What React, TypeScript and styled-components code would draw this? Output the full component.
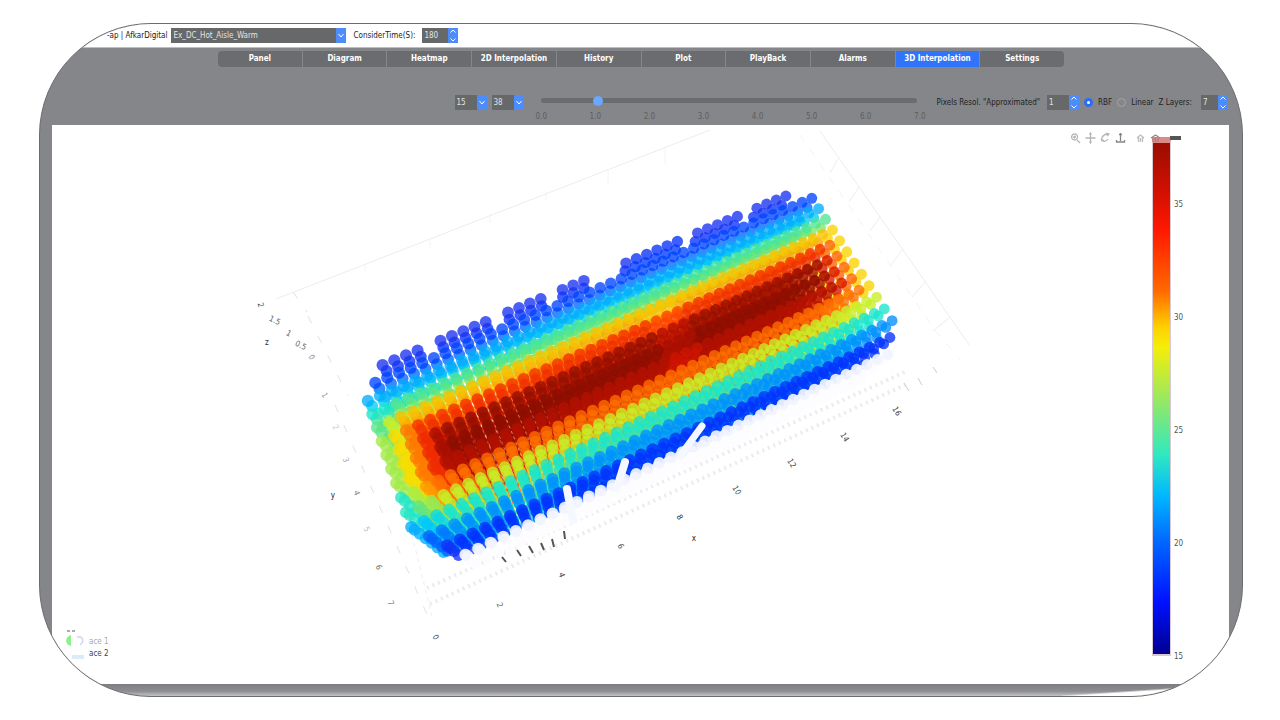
import React from "react";
import styled, { createGlobalStyle } from "styled-components";

const GlobalStyle = createGlobalStyle`
  * { box-sizing: border-box; }
  body {
    margin: 0;
    background: #fff;
    font-family: "DejaVu Sans Condensed", "DejaVu Sans", sans-serif;
    font-size: 8px;
    line-height: 12px;
    color: #222;
  }
  button, input, select { font: inherit; margin: 0; }
`;

const Page = styled.main`
  min-height: 100vh;
  padding: 23px 37px 23px 39px;
  display: flex;
`;

const Frame = styled.div`
  flex: 1;
  min-width: 0;
  display: flex;
  flex-direction: column;
  overflow: hidden;
  border: 1px solid #6c6c6e;
  border-radius: 112px;
  background: #85868a;
`;

const TopBar = styled.header`
  display: flex;
  align-items: center;
  gap: 7px;
  height: 24px;
  padding-left: 67px;
  background: #fff;
  border-bottom: 1px solid #bdbdc0;
`;

const Brand = styled.span`
  margin-right: -3px;
  white-space: nowrap;
`;

const FieldLabel = styled.label<{ $gap?: number }>`
  margin-right: ${(p) => p.$gap ?? 0}px;
  white-space: nowrap;
`;

const Field = styled.span<{ $width: number }>`
  position: relative;
  display: flex;
  flex: none;
  width: ${(p) => p.$width}px;
  height: 15px;
  background: #66686a;
`;

const fieldText = `
  width: 100%;
  height: 100%;
  padding: 0 12px 0 2px;
  border: 0;
  background: transparent;
  color: #e4e4e4;
  appearance: none;
`;

const Select = styled.select`${fieldText}`;

const NumberInput = styled.input`
  ${fieldText}
  -moz-appearance: textfield;
  &::-webkit-inner-spin-button { display: none; }
`;

const Arrow = styled.svg`
  position: absolute;
  top: 0;
  right: 0;
  width: 10px;
  height: 15px;
  background: #4d8dfb;
  border-radius: 1px;
  pointer-events: none;
`;

const Tabs = styled.nav`
  display: flex;
  width: 846px;
  max-width: 100%;
  margin: 3px auto 0;
  border-radius: 4px;
  overflow: hidden;
  background: #6b6c6f;
`;

const Tab = styled.button<{ $active?: boolean }>`
  flex: 1 1 0;
  height: 16px;
  padding: 0;
  border: 0;
  border-right: 1px solid #85868a;
  background: ${(p) => (p.$active ? "#2f74fa" : "transparent")};
  color: #fff;
  font-weight: 700;
  white-space: nowrap;
  &:last-child { border-right: 0; }
`;

const Controls = styled.section`
  display: flex;
  justify-content: flex-end;
  align-items: flex-start;
  height: 58px;
  padding: 28px 14px 0 0;
`;

const ControlGroup = styled.div`
  display: flex;
  align-items: center;
  gap: 5px;
  height: 15px;
`;

const SliderBox = styled.div`
  flex: 0 1 390px;
  margin: 3px 11px 0 12px;
`;

const Slider = styled.input`
  display: block;
  width: calc(100% - 14px);
  height: 5px;
  margin-left: 5px;
  border-radius: 3px;
  background: #6b6c6f;
  appearance: none;
  &::-webkit-slider-thumb {
    appearance: none;
    width: 10px;
    height: 10px;
    border-radius: 50%;
    background: #6ba6ff;
  }
`;

const SliderScale = styled.div`
  display: flex;
  justify-content: space-between;
  margin-top: 8px;
  color: #5c5e61;
`;

const Radio = styled.input`
  width: 9px;
  height: 9px;
  border-radius: 50%;
  border: 1px solid #a3a4a7;
  background: #85868a;
  appearance: none;
  &:checked {
    border: 3px solid #2a6df0;
    background: #fff;
  }
`;

const Plot = styled.section`
  position: relative;
  flex: 1;
  display: flex;
  min-height: 0;
  margin: 0 13px 0 12px;
  background: #fff;
`;

const Chart = styled.svg`
  flex: 1;
  min-width: 0;
  height: 100%;
  font-size: 8px;
`;

const ColorBar = styled.div`
  display: flex;
  gap: 3px;
  width: 77px;
  padding: 12px 0 28px;
`;

const ColorRamp = styled.div`
  width: 19px;
  border: 1px solid #d9c9d2;
  border-top: 6px solid #dc8a86;
  border-bottom-width: 2px;
  background: linear-gradient(
    #9a0d00, #d51000 10%, #ff1800 17%, #ff6a00 29%, #ffd000 36%, #f4ee08 40%,
    #9ae860 50%, #30e8c0 61%, #00b8ff 69%, #0068ff 78%, #0010ff 90%, #000090
  );
`;

const ColorTicks = styled.ol`
  display: flex;
  flex-direction: column;
  justify-content: space-between;
  margin: 0 0 -7px;
  padding: 62px 0 0;
  list-style: none;
  color: #555;
`;

const ModeBar = styled.div`
  position: absolute;
  top: 7px;
  right: 48px;
  display: flex;
  gap: 4px;
`;

const ModeButton = styled.button<{ $spaced?: boolean }>`
  width: 11px;
  height: 12px;
  padding: 0;
  margin-left: ${(p) => (p.$spaced ? 5 : 0)}px;
  border: 0;
  background: none;
  svg { display: block; width: 11px; height: 12px; }
`;

const Legend = styled.div`
  position: absolute;
  left: 12px;
  bottom: 24px;
  display: flex;
  gap: 4px;
`;

const LegendNames = styled.div`
  display: flex;
  flex-direction: column;
  justify-content: flex-end;
  color: #444;
  span:first-child { color: #aaa; }
`;

const Footer = styled.footer`
  height: 12px;
  background: linear-gradient(to bottom right, transparent 46%, #fff 54%) right / 180px 100% no-repeat,
    linear-gradient(#7d7e82, #8d8e92 60%, #c4c4c6);
`;

type Pt = { x: number; y: number };

const COLS = 42;
const ROWS = 14;
/* Depth of each layer, as a share of the way to the vanishing point. */
const LAYER_DEPTHS = [0, 0.02, 0.05, 0.085, 0.12, 0.155, 0.19, 0.225];
const TL: Pt = { x: 359, y: 375 };
const TR: Pt = { x: 805, y: 188 };
const BR: Pt = { x: 908, y: 345 };
const BL: Pt = { x: 427, y: 573 };
const DEPTH: Pt = { x: 580, y: 660 };

/* Perspective mapping of the unit square onto the top layer. */
const sx = TL.x - TR.x + BR.x - BL.x;
const sy = TL.y - TR.y + BR.y - BL.y;
const dx1 = TR.x - BR.x, dx2 = BL.x - BR.x;
const dy1 = TR.y - BR.y, dy2 = BL.y - BR.y;
const det = dx1 * dy2 - dx2 * dy1;
const pg = (sx * dy2 - dx2 * sy) / det;
const ph = (dx1 * sy - sx * dy1) / det;

function project(col: number, row: number, depth = 0): Pt {
  const u = col / COLS, v = row / ROWS;
  const w = pg * u + ph * v + 1;
  const x = ((TR.x - TL.x + pg * TR.x) * u + (BL.x - TL.x + ph * BL.x) * v + TL.x) / w;
  const y = ((TR.y - TL.y + pg * TR.y) * u + (BL.y - TL.y + ph * BL.y) * v + TL.y) / w;
  return { x: x + (DEPTH.x - x) * depth, y: y + (DEPTH.y - y) * depth };
}

const STOPS: [number, number[]][] = [
  [0, [35, 50, 238]], [0.12, [0, 50, 255]], [0.28, [0, 145, 255]], [0.36, [0, 200, 250]],
  [0.44, [25, 230, 205]], [0.52, [100, 228, 125]], [0.6, [200, 238, 40]], [0.66, [250, 220, 0]],
  [0.75, [255, 135, 0]], [0.85, [255, 60, 0]], [0.92, [215, 20, 0]], [1, [140, 14, 0]],
];

function heat(t: number): string {
  if (t < 0) t = 0;
  for (let i = 1; i < STOPS.length; i++) {
    const [b, cb] = STOPS[i];
    if (t <= b) {
      const [a, ca] = STOPS[i - 1];
      const f = (t - a) / (b - a);
      return `rgb(${ca.map((c, k) => Math.round(c + (cb[k] - c) * f)).join(",")})`;
    }
  }
  return "rgb(140,14,0)";
}

const PROFILE = [0.03, 0.15, 0.32, 0.5, 0.69, 0.87, 0.99, 1, 0.96, 0.78, 0.6, 0.44, 0.28, 0.11, 0.1];
const LOW_CAP = [0.57, 0.66, 0.77, 0.88, 0.97];
const HIGH_CAP = [0.67, 0.8, 0.92, 0.98];
const RACKS = [[376, 422], [433, 488], [500, 542], [553, 594], [625, 684], [694, 742], [751, 790]];

function temperature(col: number, row: number, layer: number): number {
  /* Upper rows of a deeper layer warm up towards the middle of the aisle. */
  const at = Math.min(ROWS, row + LAYER_DEPTHS[layer] * (20 - row) * Math.max(0, 1 - row / 9));
  const lo = Math.floor(at), hi = Math.min(ROWS, lo + 1);
  let t = PROFILE[lo] + (PROFILE[hi] - PROFILE[lo]) * (at - lo);
  if (row === 0 && col > 24 && col < 31) t += 0.06;
  if (at > 4 && at < 9 && Math.abs(col - 25) < 2) t -= 0.03;
  if (col < 5) t = Math.min(t, LOW_CAP[col]);
  if (COLS - col < 4) t = Math.min(t, HIGH_CAP[COLS - col]);
  if (col < 3 && row > 8) t -= 0.12 - col * 0.04;
  if (col < 2 && row > 2 && row < 5) t -= 0.06;
  return t;
}

function isPresent(col: number, row: number, layer: number): boolean {
  const p = project(col, row);
  if (row === 0) return layer < 2 && RACKS.some(([a, b]) => p.x >= a && p.x <= b);
  if (row === 1 && col === 0) return false;
  if (row === 11) return col > 2 || layer < 7;
  if (row === 12) return col > 0 && layer < 5;
  if (row === 13) return col > 1 && col < COLS && layer < 4;
  if (row === 14) return col > 2 && col < COLS - 1 && layer < 4;
  return true;
}

const beads: React.ReactElement[] = [];
for (let k = LAYER_DEPTHS.length - 1; k >= 0; k--) {
  for (let row = 0; row <= ROWS; row++) {
    for (let col = 0; col <= COLS; col++) {
      if (!isPresent(col, row, k)) continue;
      const p = project(col, row, LAYER_DEPTHS[k]);
      beads.push(
        <circle
          key={`${k}-${row}-${col}`}
          cx={p.x.toFixed(1)}
          cy={p.y.toFixed(1)}
          r={(6.1 - col * 0.016 - k * 0.08).toFixed(2)}
          fill={row === ROWS ? (k === 0 ? "#f1f4ff" : "#fdfdff") : heat(temperature(col, row, k))}
          opacity={row === ROWS ? 0.92 : 0.78}
        />
      );
    }
  }
}

const seams = [5, 6, 7, 8, 9, 10, 11, 12, 13].map((c) => ({
  a: project(c + 0.5, 2),
  b: project(c + 0.5, 12),
  o: 0.65 - Math.abs(c - 9) * 0.13,
}));

const spikes = [
  [567, 489, 573, 520, 8], [625, 462, 617, 488, 8], [702, 426, 680, 456, 7],
];

const axisMarks: [string, number, number, number, string][] = [
  ["2", 261, 308, 75, "#555"], ["1.5", 275, 323, 25, "#666"], ["1", 289, 336, 30, "#555"],
  ["0.5", 301, 348, 25, "#666"], ["0", 312, 360, 60, "#888"], ["z", 267, 345, 0, "#333"],
  ["1", 325, 398, 60, "#999"], ["2", 336, 430, 60, "#ccc"], ["3", 346, 463, 70, "#aaa"],
  ["y", 333, 498, 0, "#222"], ["4", 357, 496, 70, "#888"], ["5", 367, 532, 60, "#bbb"],
  ["6", 379, 570, 60, "#666"], ["7", 391, 606, 70, "#777"], ["0", 436, 640, 60, "#444"],
  ["2", 500, 608, 70, "#666"], ["4", 562, 578, 70, "#444"], ["6", 621, 549, 60, "#444"],
  ["8", 680, 520, 60, "#333"], ["x", 694, 541, 0, "#222"], ["10", 737, 493, 60, "#444"],
  ["12", 792, 466, 60, "#444"], ["14", 845, 440, 60, "#444"], ["16", 897, 414, 60, "#333"],
];

function ScatterChart() {
  return (
    <Chart viewBox="52 125 1100 559" preserveAspectRatio="xMinYMin meet" role="img" aria-label="3D temperature interpolation">
      <g fill="none" stroke="#ededee">
        <path d="M276 299 L710 130 M820 131 L970 346" />
        <path d="M365 264v9M430 239v9M490 214v9M546 192v9M608 170v14M665 148v16" opacity=".6" />
        <path d="M838 159l-8 14M859 187l-10 15M880 217l-10 14M903 249l-12 16M926 281l-14 16M949 318l-16 13" />
        <path d="M800 135L935 330L960 360" strokeDasharray="8 9" opacity=".7" />
        <path d="M293 292l14 20M308 316l40 80M335 405l90 205l8 16" stroke="#e2e2e2" strokeDasharray="8 14" />
        <path d="M427 588L905 372M430 604L905 385" stroke="#ebebeb" strokeWidth="4" strokeDasharray="2 4" />
        <path d="M412 535L433 620" strokeDasharray="4 4" />
        <path d="M904 383l5 8M918 378l4 7M933 367l4 6" stroke="#ccc" />
      </g>
      <g>{beads}</g>
      {seams.map((s, i) => (
        <line key={i} x1={s.a.x} y1={s.a.y} x2={s.b.x} y2={s.b.y} stroke="#ffd990" strokeDasharray="3 3" opacity={s.o} />
      ))}
      {spikes.map(([x1, y1, x2, y2, w]) => (
        <line key={x1} x1={x1} y1={y1} x2={x2} y2={y2} stroke="#f6f8ff" strokeWidth={w} strokeLinecap="round" />
      ))}
      <path d="M506 562l-4-5M517 550l4 6M529 546l4 7M541 543l3 7M552 539l2 8M564 531l1 8" stroke="#555" strokeWidth="2" />
      {axisMarks.map(([t, x, y, r, c]) => (
        <text key={`${x}-${y}`} x={x} y={y} fill={c} textAnchor="middle" transform={`rotate(${r} ${x} ${y - 3})`}>{t}</text>
      ))}
    </Chart>
  );
}

function Dropdown({ label, width, value }: { label: string; width: number; value: string }) {
  return (
    <Field $width={width}>
      <Select aria-label={label} defaultValue={value}><option>{value}</option></Select>
      <Arrow viewBox="0 0 10 15"><path d="M2.5 6l2.5 3 2.5-3" fill="none" stroke="#fff" /></Arrow>
    </Field>
  );
}

function Spinner({ id, width, value }: { id: string; width: number; value: number }) {
  return (
    <Field $width={width}>
      <NumberInput id={id} type="number" defaultValue={value} />
      <Arrow viewBox="0 0 10 15"><path d="M2.5 4.5l2.5-2.5 2.5 2.5M2.5 10.5l2.5 2.5 2.5-2.5" fill="none" stroke="#fff" /></Arrow>
    </Field>
  );
}

const TAB_NAMES = [
  "Panel", "Diagram", "Heatmap", "2D Interpolation", "History",
  "Plot", "PlayBack", "Alarms", "3D Interpolation", "Settings",
];

const TOOLS: [string, string, string][] = [
  ["Zoom", "#b5b5b5", "M4.5 2a3 3 0 1 0 .1 0M7 8l3 3M3 5h3M4.500 3.500v3"],
  ["Pan", "#b5b5b5", "M5.500 1v10M.5 6h10M4.500 2.500l1-1.500 1 1.500M4.500 9.500l1 1.500 1-1.500"],
  ["Orbit", "#b5b5b5", "M8 2C3 2 1 6 2 8s4 2 6-1M6 1l3 1-2 2M1 7l1 2 2-1"],
  ["Turntable", "#858585", "M5.500 1v8M1.500 8v2h8V8M4 2.500h3"],
  ["Reset camera", "#bdbdbd", "M2 6l3.500-3L9 6M3.500 5v5M7.500 5v5M5.500 6v4"],
  ["Last camera", "#a58080", "M1 6l4.500-3L10 6M3 6v4M5.500 5v5M8 6v4"],
];

export default function App() {
  return (
    <>
      <GlobalStyle />
      <Page>
        <Frame>
          <TopBar>
            <Brand>-ap | AfkarDigital</Brand>
            <Dropdown label="Project" width={175} value="Ex_DC_Hot_Aisle_Warm" />
            <FieldLabel htmlFor="time">ConsiderTime(S):</FieldLabel>
            <Spinner id="time" width={36} value={180} />
          </TopBar>
          <Tabs aria-label="Views">
            {TAB_NAMES.map((name) => (
              <Tab key={name} type="button" $active={name === "3D Interpolation"}>{name}</Tab>
            ))}
          </Tabs>
          <Controls>
            <ControlGroup>
              <Dropdown label="Minimum temperature" width={32} value="15" />
              <Dropdown label="Maximum temperature" width={32} value="38" />
            </ControlGroup>
            <SliderBox>
              <Slider type="range" min={0} max={7} step={0.1} defaultValue={1} aria-label="Level" />
              <SliderScale>
                {[0, 1, 2, 3, 4, 5, 6, 7].map((n) => <span key={n}>{n.toFixed(1)}</span>)}
              </SliderScale>
            </SliderBox>
            <ControlGroup>
              <FieldLabel htmlFor="resolution" $gap={2}>Pixels Resol. "Approximated"</FieldLabel>
              <Spinner id="resolution" width={32} value={1} />
              <Radio id="rbf" type="radio" name="method" defaultChecked />
              <FieldLabel htmlFor="rbf">RBF</FieldLabel>
              <Radio id="linear" type="radio" name="method" />
              <FieldLabel htmlFor="linear">Linear</FieldLabel>
              <FieldLabel htmlFor="layers" $gap={4}>Z Layers:</FieldLabel>
              <Spinner id="layers" width={27} value={7} />
            </ControlGroup>
          </Controls>
          <Plot>
            <ScatterChart />
            <ColorBar>
              <ColorRamp />
              <ColorTicks>
                {[35, 30, 25, 20, 15].map((n) => <li key={n}>{n}</li>)}
              </ColorTicks>
            </ColorBar>
            <ModeBar>
              {TOOLS.map(([name, color, d], i) => (
                <ModeButton key={name} type="button" aria-label={name} $spaced={i === 4}>
                  <svg viewBox="0 0 11 12"><path d={d} fill="none" stroke={color} strokeWidth="1.3" /></svg>
                </ModeButton>
              ))}
              <ModeButton type="button" aria-label="Logo" $spaced>
                <svg viewBox="0 0 11 12"><path d="M0 4h11v4H0z" fill="#555" /></svg>
              </ModeButton>
            </ModeBar>
            <Legend>
              <svg width="21" height="32" viewBox="0 0 21 32" aria-hidden="true">
                <path d="M3 3h3M8 3h3" stroke="#aaa" strokeWidth="2" />
                <path d="M7 7v11C1 17 0 9 7 7" fill="#8cf08c" />
                <path d="M13 9h4q4 4-1 8" fill="none" stroke="#cbd6ec" strokeWidth="1.500" />
                <path d="M8 29h12" stroke="#dcebfa" strokeWidth="4" />
              </svg>
              <LegendNames>
                <span>ace 1</span>
                <span>ace 2</span>
              </LegendNames>
            </Legend>
          </Plot>
          <Footer />
        </Frame>
      </Page>
    </>
  );
}
